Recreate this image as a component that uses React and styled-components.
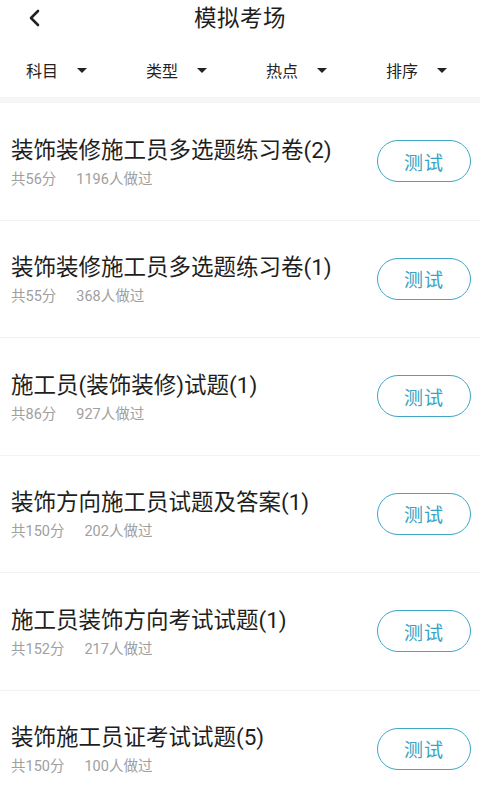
import React from 'react';
import styled, { createGlobalStyle } from 'styled-components';

const GlobalStyle = createGlobalStyle`
    html, body {
        margin: 0;
        padding: 0;
        background: #ffffff;
    }
    body {
        font-family: Roboto, "Noto Sans CJK SC", "Noto Sans", sans-serif;
        color: #222222;
    }
`;

const Page = styled.div`
    width: 480px;
    min-height: 800px;
    background: #ffffff;
    overflow: hidden;
`;

const Header = styled.div`
    height: 36px;
    display: flex;
    align-items: center;
    justify-content: center;
    position: relative;
`;

const BackButton = styled.div`
    position: absolute;
    left: 26px;
    top: 8px;
    width: 16px;
    height: 20px;
    display: flex;
    align-items: center;
    justify-content: center;
`;

const Title = styled.div`
    font-size: 22.5px;
    line-height: 36px;
    color: #1e1e1e;
    letter-spacing: 0.5px;
`;

const FilterBar = styled.div`
    display: grid;
    grid-template-columns: repeat(4, 120px);
    height: 54px;
    padding-top: 7px;
    border-bottom: 6px solid #f5f5f5;
`;

const Filter = styled.div`
    display: flex;
    align-items: center;
    padding-left: 26px;
    font-size: 16px;
    color: #222222;
`;

const Caret = styled.span`
    margin-left: 19px;
    width: 0;
    height: 0;
    border-left: 5.5px solid transparent;
    border-right: 5.5px solid transparent;
    border-top: 5px solid #222222;
`;

const List = styled.div`
    display: flex;
    flex-direction: column;
`;

const Item = styled.div`
    height: 116.5px;
    display: flex;
    align-items: center;
    justify-content: space-between;
    padding: 0 9px 0 11px;
    border-bottom: 1px solid #f3f3f3;
`;

const Info = styled.div`
    display: flex;
    flex-direction: column;
`;

const ItemTitle = styled.div`
    font-size: 22.5px;
    line-height: 30px;
    color: #1e1e1e;
`;

const Meta = styled.div`
    display: flex;
    gap: 20px;
    margin-top: 7px;
    font-size: 14.5px;
    line-height: 16px;
    color: #a0a0a0;
`;

const TestButton = styled.div`
    width: 94px;
    height: 42px;
    box-sizing: border-box;
    border: 1.5px solid #3ea7c7;
    border-radius: 21px;
    display: flex;
    align-items: center;
    justify-content: center;
    font-size: 19px;
    color: #36a3c4;
    letter-spacing: 1px;
`;

const filters = ['科目', '类型', '热点', '排序'];

const papers = [
    { title: '装饰装修施工员多选题练习卷(2)', score: 56, count: 1196 },
    { title: '装饰装修施工员多选题练习卷(1)', score: 55, count: 368 },
    { title: '施工员(装饰装修)试题(1)', score: 86, count: 927 },
    { title: '装饰方向施工员试题及答案(1)', score: 150, count: 202 },
    { title: '施工员装饰方向考试试题(1)', score: 152, count: 217 },
    { title: '装饰施工员证考试试题(5)', score: 150, count: 100 },
];

const App = () => {
    return (
        <Page>
            <GlobalStyle />
            <Header>
                <BackButton>
                    <svg width="14" height="18" viewBox="0 0 14 18">
                        <path d="M11 2 L4 9 L11 16" fill="none" stroke="#222" strokeWidth="2.6" strokeLinecap="round" strokeLinejoin="round" />
                    </svg>
                </BackButton>
                <Title>模拟考场</Title>
            </Header>

            <FilterBar>
                {filters.map(f => (
                    <Filter key={f}>
                        {f}
                        <Caret />
                    </Filter>
                ))}
            </FilterBar>

            <List>
                {papers.map((p, i) => (
                    <Item key={i}>
                        <Info>
                            <ItemTitle>{p.title}</ItemTitle>
                            <Meta>
                                <span>共{p.score}分</span>
                                <span>{p.count}人做过</span>
                            </Meta>
                        </Info>
                        <TestButton>测试</TestButton>
                    </Item>
                ))}
            </List>
        </Page>
    );
};

export default App;
